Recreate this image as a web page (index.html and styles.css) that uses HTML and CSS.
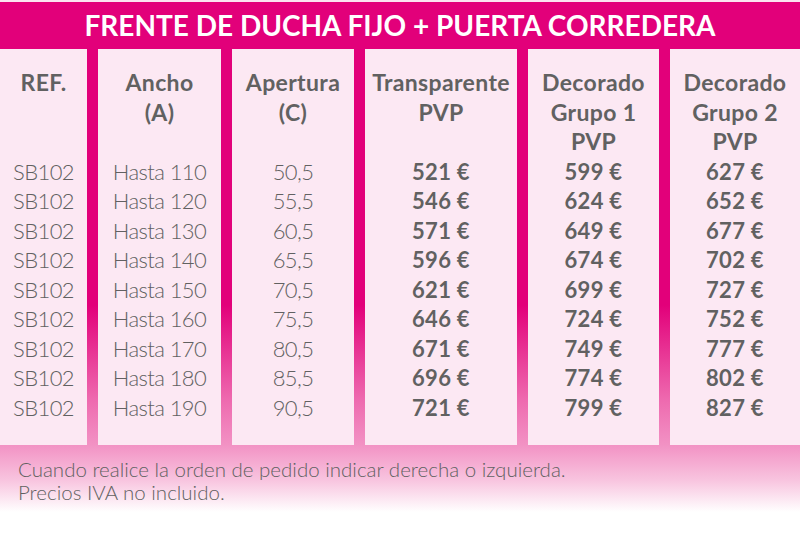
FILE: index.html
```html
<!DOCTYPE html>
<html lang="es">
<head>
<meta charset="utf-8">
<title>Frente de ducha fijo + puerta corredera</title>
<link rel="stylesheet" href="styles.css">
</head>
<body>
<div class="sheet">
  <h1 class="title">FRENTE DE DUCHA FIJO + PUERTA CORREDERA</h1>
  <div class="table">
    <div class="col">
      <div class="head">REF.</div>
      <div class="cell">SB102</div><div class="cell">SB102</div><div class="cell">SB102</div>
      <div class="cell">SB102</div><div class="cell">SB102</div><div class="cell">SB102</div>
      <div class="cell">SB102</div><div class="cell">SB102</div><div class="cell">SB102</div>
    </div>
    <div class="col">
      <div class="head">Ancho<br>(A)</div>
      <div class="cell">Hasta 110</div><div class="cell">Hasta 120</div><div class="cell">Hasta 130</div>
      <div class="cell">Hasta 140</div><div class="cell">Hasta 150</div><div class="cell">Hasta 160</div>
      <div class="cell">Hasta 170</div><div class="cell">Hasta 180</div><div class="cell">Hasta 190</div>
    </div>
    <div class="col">
      <div class="head">Apertura<br>(C)</div>
      <div class="cell">50,5</div><div class="cell">55,5</div><div class="cell">60,5</div>
      <div class="cell">65,5</div><div class="cell">70,5</div><div class="cell">75,5</div>
      <div class="cell">80,5</div><div class="cell">85,5</div><div class="cell">90,5</div>
    </div>
    <div class="col">
      <div class="head">Transparente<br>PVP</div>
      <div class="cell price">521 €</div><div class="cell price">546 €</div><div class="cell price">571 €</div>
      <div class="cell price">596 €</div><div class="cell price">621 €</div><div class="cell price">646 €</div>
      <div class="cell price">671 €</div><div class="cell price">696 €</div><div class="cell price">721 €</div>
    </div>
    <div class="col">
      <div class="head">Decorado<br>Grupo 1<br>PVP</div>
      <div class="cell price">599 €</div><div class="cell price">624 €</div><div class="cell price">649 €</div>
      <div class="cell price">674 €</div><div class="cell price">699 €</div><div class="cell price">724 €</div>
      <div class="cell price">749 €</div><div class="cell price">774 €</div><div class="cell price">799 €</div>
    </div>
    <div class="col">
      <div class="head">Decorado<br>Grupo 2<br>PVP</div>
      <div class="cell price">627 €</div><div class="cell price">652 €</div><div class="cell price">677 €</div>
      <div class="cell price">702 €</div><div class="cell price">727 €</div><div class="cell price">752 €</div>
      <div class="cell price">777 €</div><div class="cell price">802 €</div><div class="cell price">827 €</div>
    </div>
  </div>
  <div class="notes">
    <p>Cuando realice la orden de pedido indicar derecha o izquierda.</p>
    <p>Precios IVA no incluido.</p>
  </div>
</div>
</body>
</html>
```
FILE: styles.css
```css
html, body {
  margin: 0;
  padding: 0;
  background: #ffffff;
}
body {
  width: 800px;
  height: 550px;
  overflow: hidden;
  font-family: Lato, "Open Sans", sans-serif;
  color: #616161;
}
.sheet {
  padding-top: 2px;
  background: linear-gradient(to bottom,
    #fbe4f0 0, #fbe4f0 2px,
    #e2007a 2px, #e2007a 305px,
    #ee6aaf 400px, #f292c4 445px,
    #f8c4df 480px, #ffffff 512px);
  height: 548px;
}
.title {
  margin: 0;
  height: 47px;
  line-height: 46px;
  text-align: center;
  color: #ffffff;
  font-size: 28px;
  font-weight: 700;
}
.table {
  display: grid;
  grid-template-columns: 87px 123px 122px 152px 131px 130px;
  column-gap: 11px;
}
.col {
  background: #fce8f3;
  height: 396px;
  box-sizing: border-box;
  padding-top: 19px;
  text-align: center;
  font-size: 22px;
  line-height: 29.5px;
}
.head {
  height: 88.5px;
  font-size: 23px;
  font-weight: 700;
  letter-spacing: 0.35px;
}
.cell {
  font-weight: 300;
  letter-spacing: -0.6px;
}
.cell.price {
  font-weight: 700;
  letter-spacing: 0.3px;
}
.notes {
  padding: 13px 0 0 18px;
  font-size: 20.5px;
  font-weight: 300;
  line-height: 23px;
}
.notes p {
  margin: 0;
}
```
